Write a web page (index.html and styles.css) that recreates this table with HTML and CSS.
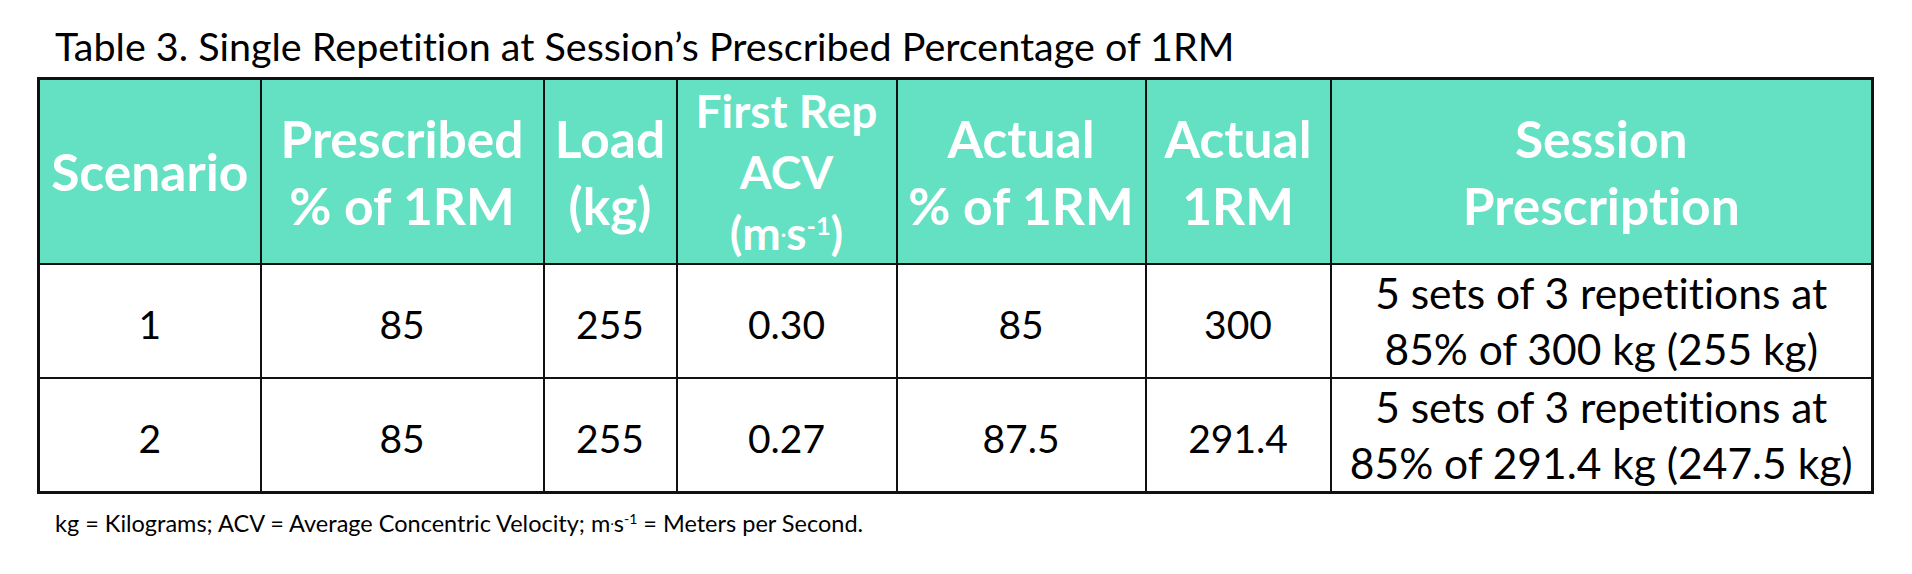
FILE: index.html
```html
<!DOCTYPE html>
<html lang="en">
<head>
<meta charset="utf-8">
<title>Table 3</title>
<link rel="stylesheet" href="styles.css">
</head>
<body>
<div class="page">
  <h1 class="title">Table 3. Single Repetition at Session’s Prescribed Percentage of 1RM</h1>
  <table class="data">
    <colgroup>
      <col class="c1"><col class="c2"><col class="c3"><col class="c4"><col class="c5"><col class="c6"><col class="c7">
    </colgroup>
    <thead>
      <tr>
        <th>Scenario</th>
        <th>Prescribed<br>% of 1RM</th>
        <th>Load<br>(kg)</th>
        <th class="tight">First Rep<br>ACV<br>(m<span class="dot">.</span>s<span class="sup">-1</span>)</th>
        <th>Actual<br>% of 1RM</th>
        <th>Actual<br>1RM</th>
        <th>Session<br>Prescription</th>
      </tr>
    </thead>
    <tbody>
      <tr>
        <td class="num">1</td>
        <td class="num">85</td>
        <td class="num">255</td>
        <td class="num">0.30</td>
        <td class="num">85</td>
        <td class="num">300</td>
        <td class="text">5 sets of 3 repetitions at<br>85% of 300 kg (255 kg)</td>
      </tr>
      <tr>
        <td class="num">2</td>
        <td class="num">85</td>
        <td class="num">255</td>
        <td class="num">0.27</td>
        <td class="num">87.5</td>
        <td class="num">291.4</td>
        <td class="text">5 sets of 3 repetitions at<br>85% of 291.4 kg (247.5 kg)</td>
      </tr>
    </tbody>
  </table>
  <p class="note">kg = Kilograms; ACV = Average Concentric Velocity; m<span class="dot-s">.</span>s<span class="sup-s">-1</span> = Meters per Second.</p>
</div>
</body>
</html>
```
FILE: styles.css
```css
html, body {
  margin: 0;
  padding: 0;
  background: #ffffff;
}

body {
  font-family: Lato, "Open Sans", "Liberation Sans", sans-serif;
  color: #000000;
  font-variant-ligatures: none;
}

.page {
  padding: 24px 0 0 37px;
}

.title {
  margin: 0 0 9px 18px;
  font-size: 39.5px;
  line-height: 44px;
  font-weight: 400;
  white-space: nowrap;
}

.data {
  border-collapse: collapse;
  table-layout: fixed;
  width: 1834px;
  border: 3px solid #111111;
}

.c1 { width: 222px; }
.c2 { width: 283px; }
.c3 { width: 133px; }
.c4 { width: 220px; }
.c5 { width: 249px; }
.c6 { width: 185px; }
.c7 { width: 542px; }

.data th,
.data td {
  border: 2px solid #111111;
  padding: 0;
  text-align: center;
  vertical-align: middle;
  white-space: nowrap;
  box-sizing: border-box;
}

.data th {
  background: #64e0c3;
  color: #ffffff;
  font-weight: 700;
  font-size: 51.5px;
  line-height: 67px;
  height: 184px;
}

.data th.tight {
  font-size: 46px;
  line-height: 61px;
}

.dot {
  position: relative;
  top: -0.55em;
  font-size: 0.5em;
  line-height: 0;
}

.sup {
  position: relative;
  top: -0.6em;
  font-size: 0.55em;
  line-height: 0;
}

.data td {
  height: 114px;
  font-size: 39px;
  line-height: 56px;
  font-weight: 400;
}

.data td.num {
  padding-top: 6px;
}

.data td.text {
  font-size: 42.5px;
}

.note {
  margin: 14px 0 0 18px;
  font-size: 23.5px;
  line-height: 30px;
  white-space: nowrap;
}

.dot-s {
  position: relative;
  top: -0.5em;
  font-size: 0.6em;
  line-height: 0;
}

.sup-s {
  position: relative;
  top: -0.55em;
  font-size: 0.6em;
  line-height: 0;
}
```
